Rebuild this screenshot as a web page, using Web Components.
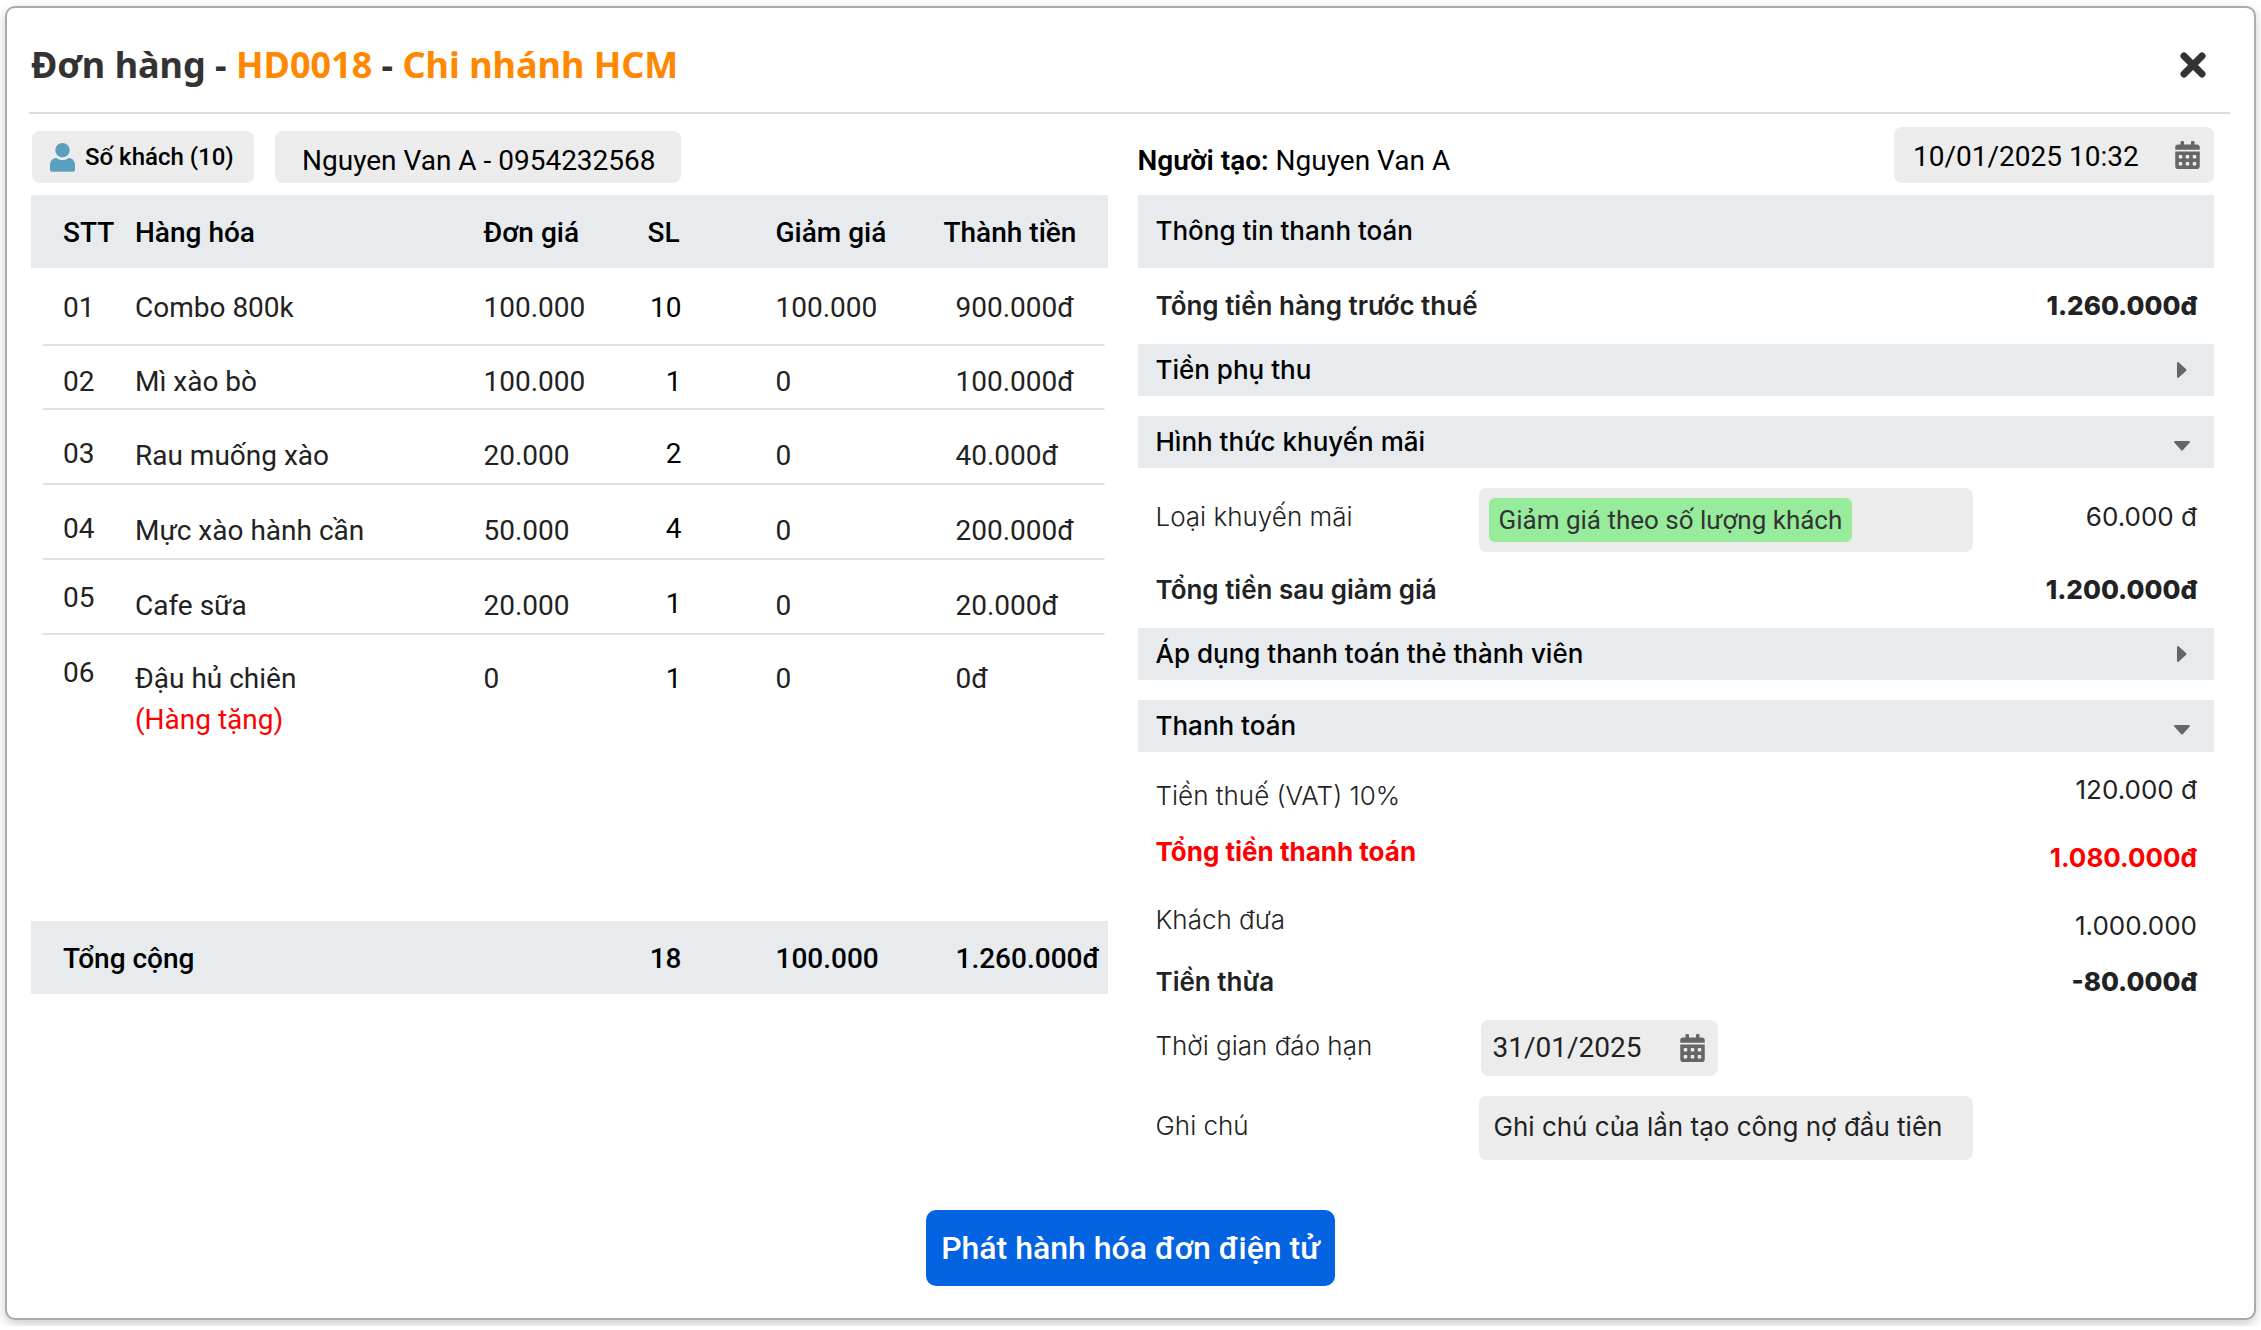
<!DOCTYPE html>
<html lang="vi">
<head>
<meta charset="utf-8">
<title>Đơn hàng HD0018</title>
<style>
  body { margin: 0; background: #fff; font-family: Roboto, "Noto Sans", sans-serif; font-size: 28px; line-height: 32px; color: #000; }
</style>
</head>
<body>
<order-dialog>
  <dialog-header slot="header"></dialog-header>
  <guest-toolbar slot="left"></guest-toolbar>
  <order-table slot="left"></order-table>

  <creator-bar slot="right"></creator-bar>
  <payment-title slot="right">Thông tin thanh toán</payment-title>
  <pay-row slot="right" class="lead" strong label="Tổng tiền hàng trước thuế">1.260.000đ</pay-row>
  <pay-section slot="right" class="bar">Tiền phụ thu</pay-section>
  <pay-section slot="right" class="bar" open>Hình thức khuyến mãi</pay-section>
  <promo-row slot="right" class="bar"></promo-row>
  <pay-row slot="right" class="lead" strong label="Tổng tiền sau giảm giá">1.200.000đ</pay-row>
  <pay-section slot="right" class="bar">Áp dụng thanh toán thẻ thành viên</pay-section>
  <pay-section slot="right" class="bar" open>Thanh toán</pay-section>
  <pay-row slot="right" class="mid" raised label="Tiền thuế (VAT) 10%">120.000 đ</pay-row>
  <pay-row slot="right" class="near" strong total lowered label="Tổng tiền thanh toán">1.080.000đ</pay-row>
  <pay-row slot="right" class="far" lowered label="Khách đưa">1.000.000</pay-row>
  <pay-row slot="right" class="near" strong label="Tiền thừa">-80.000đ</pay-row>
  <field-row slot="right" class="mid" kind="date" label="Thời gian đáo hạn" value="31/01/2025"></field-row>
  <field-row slot="right" class="bar" kind="note" label="Ghi chú" value="Ghi chú của lần tạo công nợ đầu tiên"></field-row>

  <primary-button slot="footer">Phát hành hóa đơn điện tử</primary-button>
</order-dialog>

<script>
const CALENDAR = `<svg class="cal" viewBox="0 0 448 512" aria-hidden="true"><path fill="#666" d="M0 464c0 26.500 21.500 48 48 48h352c26.500 0 48-21.500 48-48V192H0v272zm320-196c0-6.600 5.400-12 12-12h40c6.600 0 12 5.400 12 12v40c0 6.600-5.400 12-12 12h-40c-6.600 0-12-5.400-12-12v-40zm0 128c0-6.600 5.400-12 12-12h40c6.600 0 12 5.400 12 12v40c0 6.600-5.400 12-12 12h-40c-6.600 0-12-5.400-12-12v-40zM192 268c0-6.600 5.400-12 12-12h40c6.600 0 12 5.400 12 12v40c0 6.600-5.400 12-12 12h-40c-6.600 0-12-5.400-12-12v-40zm0 128c0-6.600 5.400-12 12-12h40c6.600 0 12 5.400 12 12v40c0 6.600-5.400 12-12 12h-40c-6.600 0-12-5.400-12-12v-40zM64 268c0-6.600 5.400-12 12-12h40c6.600 0 12 5.400 12 12v40c0 6.600-5.400 12-12 12H76c-6.600 0-12-5.400-12-12v-40zm0 128c0-6.600 5.400-12 12-12h40c6.600 0 12 5.400 12 12v40c0 6.600-5.400 12-12 12H76c-6.600 0-12-5.400-12-12v-40zM400 64h-48V16c0-8.800-7.200-16-16-16h-32c-8.800 0-16 7.200-16 16v48H160V16c0-8.800-7.200-16-16-16h-32c-8.800 0-16 7.200-16 16v48H48C21.500 64 0 85.500 0 112v48h448v-48c0-26.500-21.500-48-48-48z"/></svg>`;

const BASE = `
  * { box-sizing: border-box; }
  button, input { font: inherit; color: inherit; border: 0; margin: 0; padding: 0; background: none; outline: none; }
  button { cursor: pointer; text-align: left; }
  .box { background: #ececec; border-radius: 8px; }
  .cal { width: 25px; height: 28px; flex: none; display: block; }
`;

class BaseElement extends HTMLElement {
  constructor() {
    super();
    this.attachShadow({ mode: "open" });
  }
  connectedCallback() {
    this.shadowRoot.innerHTML = `<style>${BASE}${this.styles()}</style>${this.markup()}`;
  }
}

customElements.define("order-dialog", class extends BaseElement {
  styles() { return `
    :host { display: block; padding: 6px 5px; }
    .panel { background: #fff; border: 2px solid #aaa; border-radius: 10px; box-shadow: 0 4px 12px rgba(0,0,0,.2); padding-bottom: 32px; }
    .columns { display: grid; grid-template-columns: minmax(0, 1fr) minmax(0, 1fr); gap: 30px; padding: 12px 40px 0 24px; }
    .column { display: flex; flex-direction: column; }
    ::slotted(.bar) { margin-top: 20px; }
    ::slotted(.mid) { margin-top: 22px; }
    ::slotted(.lead) { margin-top: 22px; margin-bottom: 2px; }
    ::slotted(.near) { margin-top: 24px; }
    ::slotted(.far) { margin-top: 30px; }
    footer { display: flex; justify-content: center; margin-top: 50px; }
  `; }
  markup() { return `
    <main class="panel">
      <slot name="header"></slot>
      <div class="columns">
        <section class="column"><slot name="left"></slot></section>
        <section class="column"><slot name="right"></slot></section>
      </div>
      <footer><slot name="footer"></slot></footer>
    </main>`; }
});

customElements.define("dialog-header", class extends BaseElement {
  styles() { return `
    :host { display: flex; align-items: center; justify-content: space-between; height: 106px; margin: 0 24px 0 22px; padding: 10px 24px 0 2px; border-bottom: 2px solid #ddd; box-sizing: border-box; }
    h1 { margin: 0; font: 700 36px/48px "Noto Sans", "Open Sans", sans-serif; color: #333; }
    b { color: #ff8800; font-weight: inherit; }
    svg { display: block; width: 26px; height: 26px; }
  `; }
  markup() { return `
    <h1>Đơn hàng - <b>HD0018</b> - <b>Chi nhánh HCM</b></h1>
    <button type="button" aria-label="Đóng"><svg viewBox="0 0 26 26"><path d="M4 4l18 18M22 4L4 22" stroke="#333" stroke-width="7" stroke-linecap="round"/></svg></button>`; }
});

customElements.define("guest-toolbar", class extends BaseElement {
  styles() { return `
    :host { display: flex; align-items: flex-end; gap: 21px; height: 69px; padding: 0 0 12px 1px; box-sizing: border-box; }
    .box { height: 52px; }
    button { display: flex; align-items: center; gap: 10px; width: 222px; padding-left: 18px; font-size: 24px; font-weight: 500; white-space: nowrap; }
    svg { width: 25px; height: 29px; flex: none; }
    input { width: 406px; padding: 6px 20px 0 27px; }
  `; }
  markup() { return `
    <button type="button" class="box"><svg viewBox="0 0 25 29" fill="#5b9fc0"><ellipse cx="12.500" cy="7.200" rx="7.200" ry="7.200"/><path d="M0 26.500V22c0-4.500 3-7 6.500-7 1.800 1.400 3.800 2 6 2s4.200-.6 6-2c3.500 0 6.500 2.500 6.500 7v4.500c0 1.500-1 2.300-2.300 2.300H2.300C1 28.800 0 28 0 26.500z"/></svg>Số khách (10)</button>
    <input class="box" type="text" aria-label="Khách hàng" value="Nguyen Van A - 0954232568">`; }
});

customElements.define("order-table", class extends BaseElement {
  rows = [
    ["01", "Combo 800k", "100.000", "10", "100.000", "900.000đ", "r1"],
    ["02", "Mì xào bò", "100.000", "1", "0", "100.000đ", "r2"],
    ["03", "Rau muống xào", "20.000", "2", "0", "40.000đ", "r3"],
    ["04", "Mực xào hành cần", "50.000", "4", "0", "200.000đ", "r3"],
    ["05", "Cafe sữa", "20.000", "1", "0", "20.000đ", "r3 high"],
    ["06", "Đậu hủ chiên<em>(Hàng tặng)</em>", "0", "1", "0", "0đ", "r3 high last"]
  ];
  styles() { return `
    :host { display: block; }
    table { width: 100%; table-layout: fixed; border-collapse: collapse; }
    col.no { width: 104px; } col.price { width: 128px; } col.qty { width: 164px; } col.off { width: 168px; } col.sum { width: 164px; }
    th, td { padding: 0; text-align: left; font-weight: 400; white-space: nowrap; }
    thead th, tfoot th, tfoot td { background: #e7ebee; font-weight: 500; height: 73px; vertical-align: middle; padding-top: 2px; }
    th:first-child, td:first-child { padding-left: 32px; }
    .qty { text-align: right; padding-right: 94px; color: #000; }
    thead .qty { padding-right: 96px; }
    tbody { color: #222; }
    tbody tr { background: linear-gradient(#dde2ea, #dde2ea) 12px 100% / calc(100% - 16px) 2px no-repeat; }
    tbody td { vertical-align: top; }
    .r1 td { height: 78px; padding-top: 24px; }
    .r2 td { height: 64px; padding-top: 20px; }
    .r3 td { height: 75px; padding-top: 30px; }
    .r3 td:first-child, .r3 .qty, .last td { padding-top: 28px; }
    .high td:first-child { padding-top: 22px; }
    tr.last { background: none; }
    tr.last td { height: 286px; }
    td.sum { padding-left: 12px; }
    em { display: block; font-style: normal; color: #f00; margin-top: 9px; }
  `; }
  markup() { return `
    <table>
      <colgroup><col class="no"><col><col class="price"><col class="qty"><col class="off"><col class="sum"></colgroup>
      <thead><tr><th>STT</th><th>Hàng hóa</th><th>Đơn giá</th><th class="qty">SL</th><th>Giảm giá</th><th>Thành tiền</th></tr></thead>
      <tbody>${this.rows.map(r => `<tr class="${r[6]}"><td>${r[0]}</td><td>${r[1]}</td><td>${r[2]}</td><td class="qty">${r[3]}</td><td>${r[4]}</td><td class="sum">${r[5]}</td></tr>`).join("")}</tbody>
      <tfoot><tr><th colspan="3">Tổng cộng</th><td class="qty">18</td><td>100.000</td><td class="sum">1.260.000đ</td></tr></tfoot>
    </table>`; }
});

customElements.define("creator-bar", class extends BaseElement {
  styles() { return `
    :host { display: flex; align-items: flex-end; justify-content: space-between; height: 69px; padding-bottom: 12px; box-sizing: border-box; }
    p { margin: 0; padding: 14px 0 6px; }
    b { font-weight: 600; }
    .date { display: flex; align-items: center; justify-content: space-between; width: 320px; height: 56px; padding: 0 14px 0 19px; }
    input { width: 236px; padding-top: 3px; }
  `; }
  markup() { return `
    <p><b>Người tạo:</b> Nguyen Van A</p>
    <label class="box date"><input type="text" aria-label="Ngày tạo" value="10/01/2025 10:32">${CALENDAR}</label>`; }
});

customElements.define("payment-title", class extends BaseElement {
  styles() { return `
    :host { display: block; }
    h2 { margin: 0; background: #e7ebee; height: 73px; padding: 20px 18px; font: 500 26px/32px Inter, sans-serif; }
  `; }
  markup() { return `<h2><slot></slot></h2>`; }
});

customElements.define("pay-section", class extends BaseElement {
  styles() { return `
    :host { display: block; }
    button { display: flex; align-items: center; justify-content: space-between; width: 100%; height: 52px; padding: 0 24px 0 18px; background: #e7ebee; font: 500 26px/32px Inter, sans-serif; }
    svg { width: 16px; height: 16px; }
    :host([open]) svg { margin-top: 8px; }
  `; }
  markup() {
    const open = this.hasAttribute("open");
    const path = open ? "M1 3h14q1.500 0.500 0.500 1.800L9 12q-1 1-2 0L0.500 4.800Q-0.500 3.500 1 3z" : "M3 1v14q0.500 1.500 1.800 0.500L12 9q1-1 0-2L4.800 0.500Q3.500-0.500 3 1z";
    return `<button type="button" aria-expanded="${open}"><slot></slot><svg viewBox="0 0 16 16"><path fill="#666" d="${path}"/></svg></button>`;
  }
});

const ROW = `
  .name { font: 300 26px/32px Inter, sans-serif; color: #222; }
`;

customElements.define("pay-row", class extends BaseElement {
  styles() { return ROW + `
    :host { display: flex; justify-content: space-between; align-items: center; padding: 0 17px 0 18px; color: #222; }
    .sum { font: 400 26px/32px Inter, sans-serif; }
    :host([strong]) .name { font-weight: 600; }
    :host([strong]) .sum { font-weight: 800; }
    :host([total]) .name, :host([total]) .sum { color: #f00; font-weight: 700; }
    :host([raised]), :host([lowered]) { height: 38px; }
    :host([raised]) .name, :host([lowered]) .sum { align-self: flex-end; }
    :host([raised]) .sum, :host([lowered]) .name { align-self: flex-start; }
  `; }
  markup() { return `<span class="name">${this.getAttribute("label")}</span><span class="sum"><slot></slot></span>`; }
});

customElements.define("promo-row", class extends BaseElement {
  styles() { return ROW + `
    :host { display: grid; grid-template-columns: 323px 494px 1fr; align-items: center; padding: 0 17px 0 18px; color: #222; }
    .name { padding-bottom: 6px; }
    .box { height: 64px; padding: 10px; }
    .tag { display: inline-block; height: 44px; padding: 6px 10px; border-radius: 6px; background: #96ec9b; color: #333; font-size: 26px; white-space: nowrap; }
    .sum { text-align: right; padding-bottom: 6px; font: 400 26px/32px Inter, sans-serif; }
  `; }
  markup() { return `
    <span class="name" id="promo">Loại khuyến mãi</span>
    <button type="button" class="box" aria-haspopup="listbox" aria-labelledby="promo"><span class="tag">Giảm giá theo số lượng khách</span></button>
    <span class="sum">60.000 đ</span>`; }
});

customElements.define("field-row", class extends BaseElement {
  styles() { return ROW + `
    :host { display: grid; grid-template-columns: 323px 494px; align-items: center; padding-left: 18px; color: #222; }
    .name { padding-bottom: 4px; }
    .date { display: flex; align-items: center; justify-content: space-between; width: 237px; height: 56px; padding: 0 13px 0 12px; margin-left: 2px; }
    .date input { width: 160px; }
    .note { width: 494px; height: 64px; padding: 0 15px 4px; font: 400 26px/32px Inter, sans-serif; }
  `; }
  markup() {
    const label = this.getAttribute("label"), value = this.getAttribute("value");
    const field = this.getAttribute("kind") === "date"
      ? `<span class="box date"><input id="field" type="text" value="${value}">${CALENDAR}</span>`
      : `<input id="field" class="box note" type="text" value="${value}">`;
    return `<label class="name" for="field">${label}</label>${field}`;
  }
});

customElements.define("primary-button", class extends BaseElement {
  styles() { return `
    :host { display: block; }
    button { height: 76px; padding: 0 15px; border-radius: 10px; background: #0463e0; color: #fff; font: 500 32px/40px Roboto, sans-serif; white-space: nowrap; }
  `; }
  markup() { return `<button type="button"><slot></slot></button>`; }
});
</script>
</body>
</html>
